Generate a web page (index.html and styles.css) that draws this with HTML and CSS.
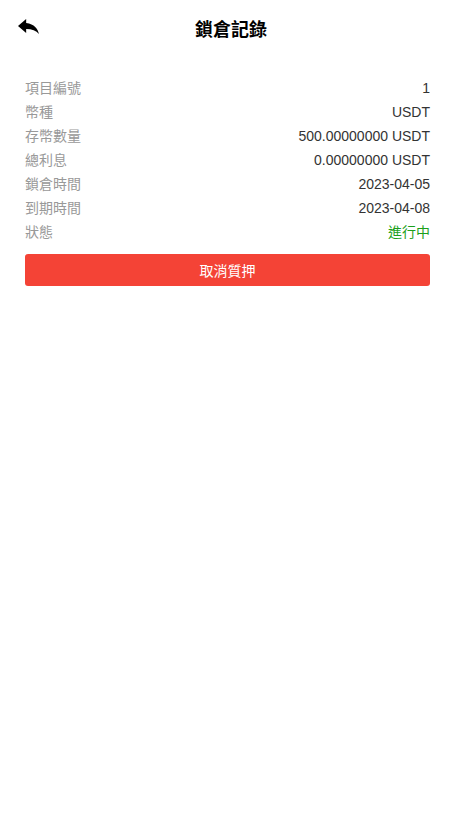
FILE: index.html
```html
<html><head>
<meta charset="UTF-8">
<meta name="viewport" content="width=device-width, initial-scale=1.0">
<title>鎖倉記錄</title>
<link rel="stylesheet" href="styles.css">
</head>
<body>
  <header class="header">
    <a class="back" href="#">
      <svg viewBox="3 5 18 15" width="21" height="15" preserveAspectRatio="none"><path d="M10 9V5l-7 7 7 7v-4.1c5 0 8.5 1.6 11 5.1-1-5-4-10-11-11z"/></svg>
    </a>
    <div class="title">鎖倉記錄</div>
  </header>

  <main class="content">
    <div class="row"><span class="label">項目編號</span><span class="value">1</span></div>
    <div class="row"><span class="label">幣種</span><span class="value">USDT</span></div>
    <div class="row"><span class="label">存幣數量</span><span class="value">500.00000000 USDT</span></div>
    <div class="row"><span class="label">總利息</span><span class="value">0.00000000 USDT</span></div>
    <div class="row"><span class="label">鎖倉時間</span><span class="value">2023-04-05</span></div>
    <div class="row"><span class="label">到期時間</span><span class="value">2023-04-08</span></div>
    <div class="row"><span class="label">狀態</span><span class="value status">進行中</span></div>
    <button class="cancel-btn">取消質押</button>
  </main>
</body>
</html>
```

FILE: styles.css
```css
body, html {
  margin: 0;
  padding: 0;
  font-family: "Liberation Sans", Arial, "Noto Sans CJK TC", sans-serif;
  background-color: #fff;
}
.header {
  position: relative;
  height: 56px;
  display: flex;
  align-items: center;
  justify-content: center;
}
.back {
  position: absolute;
  left: 18px;
  top: 19px;
  color: #000;
}
.back svg {
  display: block;
  fill: #000;
}
.title {
  font-size: 18px;
  font-weight: bold;
  color: #000;
  margin-left: 7px;
}
.content {
  padding: 20px 25px 0;
}
.row {
  display: flex;
  justify-content: space-between;
  height: 24px;
  line-height: 24px;
  font-size: 14px;
}
.label {
  color: #999;
}
.value {
  color: #333;
}
.status {
  color: #1aa01a;
}
.cancel-btn {
  display: block;
  width: 100%;
  height: 32px;
  margin-top: 10px;
  border: none;
  border-radius: 3px;
  background-color: #f44336;
  color: #fff;
  font-size: 14px;
  font-family: inherit;
}
```
